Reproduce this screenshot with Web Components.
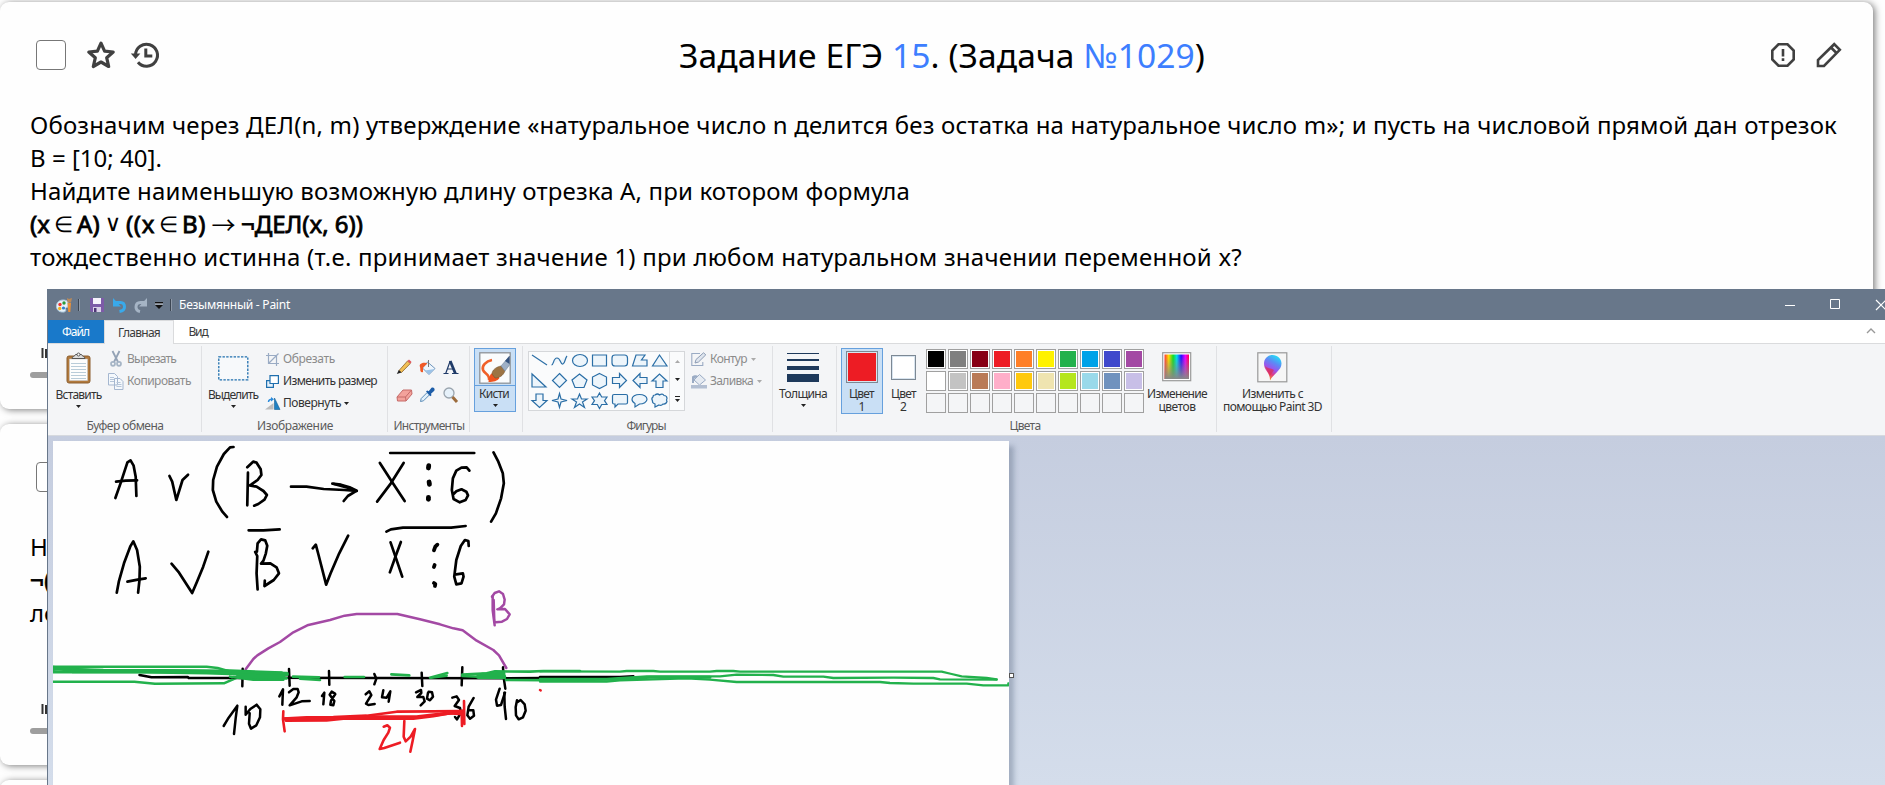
<!DOCTYPE html>
<html lang="ru">
<head>
<meta charset="utf-8">
<title>Задание ЕГЭ 15</title>
<style>
html,body{margin:0;height:785px;overflow:hidden;background:#fefefe}
body{position:relative;font-family:"Noto Sans","Open Sans",sans-serif;color:#000}
</style>
</head>
<body>
<task-page></task-page>
<paint-window></paint-window>
<script>
const define = (name, css, html, ready) => {
  const t = document.createElement('template');
  t.innerHTML = `<style>${css}</style>${html}`;
  customElements.define(name, class extends HTMLElement {
    constructor(){ super(); this.attachShadow({mode:'open'}).append(t.content.cloneNode(true)); }
    connectedCallback(){ if (ready) ready(this, this.shadowRoot); }
  });
};

/* A single line of text tracked to fill the width given in its w attribute. */
define('fit-text', `:host{display:block;white-space:nowrap;flex:none}span{display:inline-block;white-space:nowrap}`,
  `<span><slot></slot></span>`, (el, root) => {
    const w = +el.getAttribute('w'), n = el.textContent.length, s = root.querySelector('span');
    el.style.width = w + 'px';
    s.style.letterSpacing = '0px';
    const d = w - s.getBoundingClientRect().width;
    if (n > 1) s.style.letterSpacing = (d / n).toFixed(4) + 'px';
  });

/* ---------- icons ---------- */
const shape = d => `<path fill="#edf5fb" stroke="#2a6ea6" stroke-width="1.2" d="${d}"/>`;
const ICONS = {
  star:[30,30,`<path fill="none" stroke="#404040" stroke-width="3.2" stroke-linejoin="round" d="M15 3.2l3.6 8 8.6.8-6.500 5.8 2 8.700L15 22l-7.700 4.500 2-8.700L2.800 12l8.600-.8z"/>`],
  history:[30,30,`<path fill="none" stroke="#404040" stroke-width="3" d="M5.500 15A11 11 0 1 1 8 22.200M15.800 8.500v7.500h6.500"/><path fill="#404040" d="M.8 13.500h9.600L5.600 19z"/>`],
  alert:[26,26,`<path fill="none" stroke="#404040" stroke-width="2.600" d="M8.500 2.300h9l6.200 6.200v9l-6.200 6.200h-9l-6.200-6.200v-9z"/><path fill="#404040" d="M11.700 7h2.600v7.500h-2.600zM11.700 16.300h2.600v2.700h-2.600z"/>`],
  pencil:[26,26,`<path fill="none" stroke="#404040" stroke-width="2.600" d="M2 24v-6L18.200 2.200l5.600 5.600L8 24zM15 5.500l5.500 5.500"/>`],
  palette:[18,18,`<path fill="#e8f1f8" stroke="#a9c8de" d="M8 4C3 4 1 8 1.500 11c.5 4 4 5.500 7.500 5 2-.3 2-2 1.500-3s1-2 2.500-2V6C12 4.500 10 4 8 4z"/><circle cx="5" cy="8.500" r="1.700" fill="#e33"/><circle cx="9" cy="7" r="1.700" fill="#2c9a3d"/><circle cx="4.700" cy="12.500" r="1.700" fill="#f0b323"/><circle cx="8.500" cy="12" r="1.600" fill="#2d7fd0"/><path fill="#e8913a" d="M12.500 7h3.500l-.7 9h-2z"/><path fill="#b98a5a" d="M12 2l2 1 3-1-1 4.500h-3.500z"/>`],
  save:[16,16,`<path fill="#7d5ba8" d="M1 1h14v14H2.500L1 13.500z"/><path fill="#f6f2fb" d="M4 1h8v6H4z"/><path fill="#d9cfe8" d="M4 10h8v5H4z"/><path fill="#4d3575" d="M5 11h2.500v4H5z"/>`],
  undo:[15,16,`<path fill="none" stroke="#39a9ea" stroke-width="3" d="M3 5.500h5.500c3 0 4 2 4 4.500s-2 4-5 4.500"/><path fill="#39a9ea" d="M1 1v8.500h8z"/>`],
  redo:[15,16,`<path fill="none" stroke="#a5b4c5" stroke-width="3" d="M12 5.500H7.500c-3 0-4.500 2-4.500 4.500s1.500 4 4 4.500"/><path fill="#a5b4c5" d="M14 1v8.500H6z"/>`],
  qat:[8,8,`<path fill="#111" d="M0 0h8v1.500H0zM0 3h8L4 7z"/><path stroke="#fff" stroke-width=".7" d="M0 2h8"/>`],
  min:[12,12,`<path stroke="#fff" d="M1 6.500h10"/>`],
  max:[12,12,`<path fill="none" stroke="#fff" d="M1.500 1.500h9v9h-9z"/>`],
  close:[12,12,`<path stroke="#fff" stroke-width="1.200" d="M1 1l10 10M11 1L1 11"/>`],
  up:[10,6,`<path fill="none" stroke="#999" stroke-width="1.400" d="M1 5l4-4 4 4"/>`],
  arrow:[5,3,`<path fill="#222" d="M0 0h5L2.500 3z"/>`],
  arrowg:[5,3,`<path fill="#aaa" d="M0 0h5L2.500 3z"/>`],
  paste:[26,32,`<rect x="1" y="4" width="23" height="27" rx="2" fill="#b27a3d" stroke="#8c5f30"/><path fill="#fdfdfd" stroke="#c9c9c9" stroke-width=".6" d="M3.500 7h18v21.500h-18z"/><path stroke="#b9ccd9" d="M5 11.500h15M5 14.500h15M5 17.500h15M5 20.500h15M5 23.500h15M5 26.500h15"/><path fill="#ddd" stroke="#555" d="M6 6.500c0-2 3-2 3.500-4h6c.5 2 3.500 2 3.500 4z"/><circle cx="12.500" cy="2.500" r="1.500" fill="#fff" stroke="#555"/>`],
  cut:[12,16,`<path stroke="#93a2b5" stroke-width="1.800" fill="none" d="M2.500 0l5.500 11M9.500 0L4 11"/><circle cx="3" cy="12.800" r="2" fill="none" stroke="#a5b4c5" stroke-width="1.700"/><circle cx="9" cy="12.800" r="2" fill="none" stroke="#a5b4c5" stroke-width="1.700"/>`],
  copy:[16,17,`<path fill="#f4f8fc" stroke="#a5b7d0" d="M.5.500h6l3 3V12h-9zM6.500 5.500h5.500l3 3v8h-8.500z"/><path stroke="#b5c5d9" d="M2 4.500h4M2 6.500h4M2 8.500h4M8.500 9.500h4M8.500 11.500h5M8.500 13.500h5"/>`],
  select:[31,25,`<rect x=".8" y=".8" width="29" height="23" fill="#f7f9fb" stroke="#1f6fae" stroke-width="1.300" stroke-dasharray="2.400 1.300"/>`],
  crop:[13,13,`<path fill="none" stroke="#9aabc4" stroke-width="1.200" d="M2.500 0v10.500H13M0 2.500h10.500V13M3 10L12.500.5"/>`],
  resize:[13,13,`<path fill="#e4f0fa" stroke="#1f6fae" stroke-width="1.200" d="M.6 5.600h6.800v6.800H.6z"/><path fill="#fff" stroke="#1f6fae" stroke-width="1.200" d="M4 .6h8.400V8.500H4z"/>`],
  rotate:[16,13,`<path fill="#bcbcbc" d="M0 12.500h8.500V6z"/><path fill="#1f80c2" stroke="#155f94" stroke-width=".6" d="M9.500 1l5.500 11.500H9.500z"/><path fill="none" stroke="#2a8bdc" stroke-width="1.500" d="M3.500 5c0-2 1.500-2.800 3.500-2.800"/><path fill="#2a8bdc" d="M6 0l3 2.200-3 2.300z"/>`],
  tpencil:[16,16,`<path fill="#f2bf55" stroke="#96703a" stroke-width=".9" d="M3 11.500L11.500 2l2.800 2.500L5.500 13.500z"/><path fill="#222" d="M.8 15l2-4 2.700 2.500z"/><path fill="#e0565b" d="M11.500 2L13 .6l2.600 2.300-1.300 1.600z"/>`],
  bucket:[17,17,`<path fill="#eef5fc" stroke="#6f96bd" d="M8.500 3l7.500 6.500-6 6L3.500 9z"/><path fill="#9cc3e8" d="M6 11.500L15.500 10l-5.500 5.300z"/><path fill="#f05a28" d="M1 5.500C3 3 7 3.500 8.500 4.500L4 8.500v4.500c-2 1-3-1-2.700-3C1.500 8 0 7 1 5.500z"/><path fill="none" stroke="#777" d="M9.500 8V1"/>`],
  txt:[16,16,`<path fill="none" stroke="#1f3a68" stroke-width="2.800" d="M7.200 2l5.200 12.500"/><path fill="none" stroke="#1f3a68" stroke-width="1.200" d="M7.200 2L2.700 14.500M4.500 10h6M.5 14.500h5M9 14.500h6.500"/>`],
  eraser:[17,16,`<path fill="#f3a29b" stroke="#c56a68" d="M7 3h8.500L16 7l-6 7H1.500L1 10z"/><path fill="none" stroke="#c56a68" d="M1 10h8.500L15.500 3M9.500 10l.5 4"/>`],
  pip:[16,16,`<path fill="#e2f0fb" stroke="#5c8db8" d="M1.500 14.500l.7-3 6-6 2.300 2.300-6 6z"/><path fill="#1d5da8" d="M7 4.500l1.200-1 1.500.800L12.500.8c2-1 4 1 2.800 3L12 6.800l.5 1.500-1.200 1z"/>`],
  zoomi:[16,17,`<circle cx="6" cy="6" r="5" fill="#e6f1fa" stroke="#9aa4ae" stroke-width="1.300"/><path stroke="#9c6b3c" stroke-width="3" d="M9.500 10l4.500 5"/>`],
  brush:[32,32,`<rect x=".8" y=".8" width="30.400" height="30.400" fill="#fafcfd" stroke="#8f9499" stroke-width="1.300"/><path fill="none" stroke="#f0602a" stroke-width="2.600" d="M13 8C7 9 2.500 14 4 18s7 4 6 10"/><path fill="#f0531f" d="M9.500 30c0-5 2-9 6-10l5 6c-2 3-6 4-11 4z"/><path fill="#9c7444" stroke="#6e4f2a" stroke-width=".5" d="M13 22c0-4 4-7 9-8l4 5c-2 5-6 7-10 7z"/><path fill="#9eb0c6" stroke="#64788f" stroke-width=".5" d="M22 14l8.500-10v9L26 19z"/><path fill="#34527e" d="M26 9l4.500-5v8z"/>`],
  outline:[16,15,`<path fill="none" stroke="#9aabc4" stroke-width="1.100" d="M9 1.500H.8v12h11V10"/><path fill="#dfe5ee" stroke="#8d9db5" d="M4 11l1-3.500L12.500.8l2.300 2L7.500 10z"/>`],
  fill:[17,16,`<path fill="#e6ebf2" stroke="#9aabc4" d="M8.500 1.500l6 5.500-6 5L3 7z"/><path fill="#9aabc4" d="M1 3.500C3 2 6 2 7 3L3 6v4H1z"/><path fill="#b3bfd2" d="M0 12h16v3.500H0z"/>`],
  rainbow:[30,30,`<defs><linearGradient id="r"><stop offset="0" stop-color="#f33"/><stop offset=".17" stop-color="#fd0"/><stop offset=".35" stop-color="#1d2"/><stop offset=".5" stop-color="#0de"/><stop offset=".68" stop-color="#21f"/><stop offset=".85" stop-color="#e0f"/><stop offset="1" stop-color="#f04"/></linearGradient><linearGradient id="g" x2="0" y2="1"><stop offset=".1" stop-color="#888" stop-opacity="0"/><stop offset="1" stop-color="#888"/></linearGradient></defs><rect x=".7" y=".7" width="28" height="28" fill="#fff" stroke="#999" stroke-width="1.200"/><path fill="url(#r)" d="M2.500 2.500h24.500v24.500H2.500z"/><path fill="url(#g)" d="M2.500 2.500h24.500v24.500H2.500z"/>`],
  p3d:[31,31,`<defs><linearGradient id="a" x1=".7" y1="0" x2=".3" y2="1"><stop offset="0" stop-color="#1fe0f5"/><stop offset=".3" stop-color="#5a8cf5"/><stop offset=".55" stop-color="#9a55ee"/><stop offset=".75" stop-color="#e23a7c"/><stop offset="1" stop-color="#f7a21a"/></linearGradient></defs><rect x=".8" y=".8" width="29" height="29" fill="#f6f6f6" stroke="#999" stroke-width="1.200"/><path fill="url(#a)" d="M15.500 3c5 0 9 4 9 8.500 0 7-8 10-11.500 17 0-4-1-6-3-9-2-2.500-3-5-3-8C7 7 10.500 3 15.500 3z"/><path fill="#dd2e55" opacity=".7" d="M8 14c2 3 6 2 9 4l-4 6z"/>`],
  marks:[12,12,`<path stroke="#333" stroke-width="2" d="M1.500 1v10M5 2v9M8 0v11"/>`],
};
[ 'M2 3L17 13','M1.500 13C4 13 3 6 7 6s3 7 6 6c2-.5 2-6 4-8','M10 2.500c4 0 7.500 2.500 7.500 6s-3.500 6-7.500 6-7.500-2.500-7.500-6 3.500-6 7.500-6z','M2.500 3h14v11h-14z','M5 3h9.500q3 0 3 3v5q0 3-3 3H5q-3 0-3-3V6q0-3 3-3z','M2.500 14L6 3h9l-3.500 5H17v6z','M9.500 3L17 14H2.500z',
  'M2 2v13h14z','M9.500 1.500l7 7-7 7-7-7z','M9.500 2l7.500 6-3 7.500H5L2 8z','M9.500 1.500l7 3.500v8l-7 3.500-7-3.500V5z','M2.500 5.500h7v-4l7 7-7 7v-4h-7z','M17 5.500h-7v-4l-7 7 7 7v-4h7z','M6 15.500V9H2l7.500-7L17 9h-4v6.500z',
  'M6 2v6.500H2l7.500 7 7.500-7h-4V2z','M9.500 1.500l1.500 5.500 6 1.500-6 1.500-1.500 5.500L8 10 2 8.500 8 7z','M9.500 2l2 5H17l-4.500 3 2 5.500-5-3.500-5 3.500 2-5.500L2 7h5.500z','M9.500 1l2.200 4H17l-2.500 3.700L17 12.500h-5.300l-2.200 4-2.200-4H2l2.500-3.800L2 5h5.300z','M4 2.500h12q1.500 0 1.500 1.500v6.500q0 1.500-1.500 1.500H8l-3 3V12H4q-1.500 0-1.500-1.500V4Q2.500 2.500 4 2.500z','M9.500 2.500c4 0 7.500 2 7.500 4.800s-3.500 4.700-7.500 4.700L5 15v-3.500c-2-1-3-2.500-3-4.200 0-2.800 3.500-4.800 7.500-4.800z','M5 3q2.500-2 4.500 0 3-2 4.500.5 3 0 3 3-1 1.500 0 3-1 3-4 2.500-1.500 2-4 1-2 1-4 2v-3q-3-1-2.500-3-1.500-3 .5-4Q3 3 5 3z'
].forEach((d,i)=>ICONS['s'+i]=[19,18,shape(d)]);

define('ui-icon', `:host{display:block;flex:none;line-height:0}svg{display:block;overflow:visible}`, ``, (el, root) => {
  const [w,h,body] = ICONS[el.getAttribute('name')];
  if (!root.querySelector('svg')) root.innerHTML += `<svg width="${w}" height="${h}" viewBox="0 0 ${w} ${h}">${body}</svg>`;
});

/* ---------- task page ---------- */
define('task-card', `
:host{display:block;box-sizing:border-box;height:407px;width:1873px;background:#fefefe;border-radius:9px;box-shadow:2px 1px 7px rgba(0,0,0,.5);padding:34px 31px 0 30px}
:host([short]){height:341px}
header{display:flex;align-items:center;height:37px}
i{box-sizing:border-box;width:30px;height:30px;border:1.500px solid #777;border-radius:4px;margin:0 20px 0 6px;background:#fff}
.l{display:flex;flex:1;gap:14px;align-items:center}
.r{display:flex;gap:20px;align-items:center;justify-content:flex-end;width:62px}
section{margin-top:35px;font-size:24px;line-height:33px;min-height:99px}
footer{margin-top:74px;padding-left:11px;width:400px}
footer div{margin:13px 0 0 -11px;height:6px;width:400px;border-radius:3px;background:#9e9e9e}
`, `<header><i></i><div class="l"><ui-icon name="star"></ui-icon><ui-icon name="history"></ui-icon><slot name="title"></slot></div><div class="r"><ui-icon name="alert"></ui-icon><ui-icon name="pencil"></ui-icon></div></header><section><slot></slot></section><footer><ui-icon name="marks"></ui-icon><div></div></footer>`);

define('task-page', `
:host{display:block;height:785px;overflow:hidden}
main{display:flex;flex-direction:column;gap:15px;padding-top:2px}
fit-text.t{font-size:33.6px;line-height:44px;margin-left:505px}
a{color:#3d7eff;text-decoration:none}
b{font-weight:400;-webkit-text-stroke:.8px #000}
.formula{display:flex;height:33px}
.formula fit-text{-webkit-text-stroke:.8px #000}
.formula span{flex:none;text-align:center;width:27px;height:33px}
.formula .in{font-size:22px}
.formula .or{font-family:"DejaVu Sans",sans-serif;width:26px;font-size:23px}
.formula .ar{font-family:"Noto Sans CJK JP","Noto Sans CJK SC",sans-serif;width:35px}
`, `<main>
<task-card><fit-text class="t" slot="title" w="526">Задание ЕГЭ <a>15</a>. (Задача <a>№1029</a>)</fit-text>
<fit-text w="1807">Обозначим через ДЕЛ(n, m) утверждение «натуральное число n делится без остатка на натуральное число m»; и пусть на числовой прямой дан отрезок</fit-text>
<fit-text w="132">B = [10; 40].</fit-text>
<fit-text w="880">Найдите наименьшую возможную длину отрезка A, при котором формула</fit-text>
<div class="formula"><fit-text w="20">(x</fit-text><span class="in">∈</span><fit-text w="23">A)</fit-text><span class="or">∨</span><fit-text w="29">((x</fit-text><span class="in">∈</span><fit-text w="24">B)</fit-text><span class="ar">→</span><fit-text w="122">¬ДЕЛ(x, 6))</fit-text></div>
<fit-text w="1212">тождественно истинна (т.е. принимает значение 1) при любом натуральном значении переменной x?</fit-text></task-card>
<task-card short><fit-text w="18">Н</fit-text><fit-text w="22"><b>¬(</b></fit-text><fit-text w="28">ло</fit-text></task-card>
<task-card></task-card></main>`);

/* ---------- Paint ---------- */
define('title-bar', `
:host{display:flex;align-items:center;height:31px;box-sizing:border-box;color:#fff;font-size:12px;padding-left:8px}
u{width:2px;height:12px;background:#8e99a8;border-left:1px solid #3c4653;box-sizing:border-box}
.s{flex:1}
`, `<ui-icon name="palette"></ui-icon><u style="margin:0 9px 0 5px"></u><ui-icon name="save"></ui-icon><ui-icon name="undo" style="margin:0 6px 0 7px"></ui-icon><ui-icon name="redo"></ui-icon><ui-icon name="qat" style="margin:3px 6px 0 7px"></ui-icon><u style="margin:0 7px 0 1px"></u><fit-text w="111">Безымянный - Paint</fit-text><span class="s"></span><ui-icon name="min"></ui-icon><ui-icon name="max" style="margin:-1px 34px 0 33px"></ui-icon><ui-icon name="close"></ui-icon>`);

define('tab-bar', `
:host{display:flex;height:24px;background:#fff;box-sizing:border-box;border-bottom:1px solid #dadbdd;font-size:12px;line-height:23px;color:#3b3b3b}
div{box-sizing:border-box;height:23px;display:flex;justify-content:center}
.f{width:56px;background:#1979ca;color:#fff;padding-right:1px}
.m{width:70px;height:24px;background:#f4f5f7;border:1px solid #dadbdd;border-bottom:0}
.v{width:48px}
ui-icon{margin:8px 9px 0 auto}
`, `<div class="f"><fit-text w="27">Файл</fit-text></div><div class="m"><fit-text w="42">Главная</fit-text></div><div class="v"><fit-text w="19">Вид</fit-text></div><ui-icon name="up"></ui-icon>`);

define('ribbon-group', `
:host{display:flex;flex-direction:column;box-sizing:border-box;height:91px;flex:none;background:linear-gradient(#e0e1e4,#e0e1e4) right 2px/1px 86px no-repeat}
.b{height:73px;display:flex;align-items:flex-start;padding-top:1px}
.c{height:17px;display:flex;justify-content:center;color:#5c5c5c}
`, `<div class="b"><slot></slot></div><div class="c"><slot name="cap"></slot></div>`);

/* Large button: picture above, one or two lines of caption, optional menu arrow. */
define('big-button', `
:host{display:flex;flex-direction:column;align-items:center;flex:none;box-sizing:border-box;line-height:13px}
.i{height:40px;display:flex;align-items:center;justify-content:center}
ui-icon{margin-top:4px}
:host(:not([menu])) ui-icon{display:none}
`, `<div class="i"><slot name="icon"></slot></div><slot></slot><ui-icon name="arrow"></ui-icon>`);

define('tool-row', `
:host{display:flex;align-items:center;height:22px;line-height:16px;color:#333}
:host([off]){color:#8b8b8b}
.i{width:21px;display:flex;flex:none}
`, `<div class="i"><slot name="icon"></slot></div><slot></slot>`);

define('shape-gallery', `
:host{display:flex;box-sizing:border-box;width:157px;height:60px;border:1px solid #d5d7da;background:#fafbfc;flex:none}
.g{display:grid;grid-template-columns:repeat(7,20px);grid-auto-rows:20px;width:141px;border-right:1px solid #dcdee1;padding-left:1px;box-sizing:border-box}
.s{display:flex;flex-direction:column;align-items:center;flex:1;justify-content:space-around}
`, `<div class="g">${[...Array(21)].map((_,i)=>`<ui-icon name="s${i}"></ui-icon>`).join('')}</div><div class="s"><ui-icon name="arrowg" style="transform:scaleY(-1)"></ui-icon><ui-icon name="arrow"></ui-icon><ui-icon name="arrow" style="border-top:1px solid #222;padding-top:2px"></ui-icon></div>`);

const COL = ['#000','#7f7f7f','#880015','#ed1c24','#ff7f27','#fff200','#22b14c','#00a2e8','#3f48cc','#a349a4','#fff','#c3c3c3','#b97a57','#ffaec9','#ffc90e','#efe4b0','#b5e61d','#99d9ea','#7092be','#c8bfe7'];
define('color-grid', `
:host{display:grid;grid-template-columns:repeat(10,20px);grid-auto-rows:20px;gap:2px;flex:none}
i{box-sizing:border-box;border:1px solid #a0a0a0;padding:1px;background-clip:content-box;box-shadow:inset 0 0 0 1px #fff}
i.e{box-shadow:none}
`, [...Array(30)].map((_,i)=>COL[i]?`<i style="background-color:${COL[i]}"></i>`:'<i class="e"></i>').join(''));

define('ribbon-bar', `
:host{display:flex;height:92px;box-sizing:border-box;background:#f4f5f7;border-bottom:1px solid #d6d9de;font-size:12px;line-height:15px;color:#333}
.col{display:flex;flex-direction:column;padding-top:3px;flex:none}
.tools{display:grid;grid-template-columns:23px 24px 17px;grid-auto-rows:28px;margin:14px 0 0 8px}
.br{width:42px;height:64px;box-sizing:border-box;margin:3px 0 0 4px;border:1px solid #66a0dd;background:linear-gradient(#66a0dd,#66a0dd) 0 36px/100% 1px no-repeat #c9dff5}
.c1{width:42px;height:66px;margin:3px 0 0 4px;border:1px solid #66a0dd;background:#c9dff5}
.sw{box-sizing:border-box;width:32px;height:32px;border:1px solid #7c8894;background:#ed1c24;box-shadow:inset 0 0 0 1px #d8e4ef}
.sw.w{width:25px;height:25px;background:#fff}
.bars{display:flex;flex-direction:column;width:32px}
.bars i{background:#1e395b}
`, `
<ribbon-group style="width:154px">
 <big-button menu style="width:61px;padding-top:3px"><ui-icon slot="icon" name="paste" style="margin-left:1px"></ui-icon><fit-text w="46">Вставить</fit-text></big-button>
 <div class="col" style="padding-left:1px"><tool-row off><ui-icon slot="icon" name="cut"></ui-icon><fit-text w="49" style="margin-left:-4px">Вырезать</fit-text></tool-row><tool-row off style="margin-left:-2px"><ui-icon slot="icon" name="copy"></ui-icon><fit-text w="64" style="margin-left:-2px">Копировать</fit-text></tool-row></div>
 <fit-text slot="cap" w="77">Буфер обмена</fit-text></ribbon-group>
<ribbon-group style="width:186px">
 <big-button menu style="width:50px;padding-top:3px;margin-left:6px"><ui-icon slot="icon" name="select"></ui-icon><fit-text w="50">Выделить</fit-text></big-button>
 <div class="col" style="padding-left:8px"><tool-row off><ui-icon slot="icon" name="crop"></ui-icon><fit-text w="52" style="margin-left:-4px">Обрезать</fit-text></tool-row><tool-row><ui-icon slot="icon" name="resize"></ui-icon><fit-text w="94" style="margin-left:-4px">Изменить размер</fit-text></tool-row><tool-row><ui-icon slot="icon" name="rotate" style="margin-left:-1px"></ui-icon><fit-text w="58" style="margin:0 3px 0 -4px">Повернуть</fit-text><ui-icon name="arrow"></ui-icon></tool-row></div>
 <fit-text slot="cap" w="76">Изображение</fit-text></ribbon-group>
<ribbon-group style="width:82px">
 <div class="tools"><ui-icon name="tpencil"></ui-icon><ui-icon name="bucket"></ui-icon><ui-icon name="txt"></ui-icon><ui-icon name="eraser"></ui-icon><ui-icon name="pip"></ui-icon><ui-icon name="zoomi"></ui-icon></div>
 <fit-text slot="cap" w="71">Инструменты</fit-text></ribbon-group>
<ribbon-group style="width:53px">
 <big-button menu class="br"><ui-icon slot="icon" name="brush" style="margin-top:-3px"></ui-icon><fit-text w="30" style="margin:-2px 2px 0 0">Кисти</fit-text></big-button></ribbon-group>
<ribbon-group style="width:250px">
 <shape-gallery style="margin:6px 0 0 5px"></shape-gallery>
 <div class="col" style="padding-left:6px"><tool-row off><ui-icon slot="icon" name="outline"></ui-icon><fit-text w="37" style="margin:0 4px 0 -2px">Контур</fit-text><ui-icon name="arrowg"></ui-icon></tool-row><tool-row off><ui-icon slot="icon" name="fill"></ui-icon><fit-text w="43" style="margin:0 4px 0 -2px">Заливка</fit-text><ui-icon name="arrowg"></ui-icon></tool-row></div>
 <fit-text slot="cap" w="39" style="margin-left:-4px">Фигуры</fit-text></ribbon-group>
<ribbon-group style="width:64px">
 <big-button menu style="width:60px;padding-top:2px"><div slot="icon" class="bars"><i style="height:1px"></i><i style="height:2px;margin-top:5px"></i><i style="height:4px;margin-top:5px"></i><i style="height:8px;margin-top:4px"></i></div><fit-text w="48">Толщина</fit-text></big-button></ribbon-group>
<ribbon-group style="width:380px">
 <big-button class="c1" style="box-sizing:border-box"><div slot="icon" class="sw" style="margin-top:-4px"></div><fit-text w="25" style="margin:-2px 1px 0 0">Цвет</fit-text><fit-text w="7">1</fit-text></big-button>
 <big-button style="width:41px;padding-top:2px"><div slot="icon" class="sw w" style="margin-top:1px"></div><fit-text w="25">Цвет</fit-text><fit-text w="7">2</fit-text></big-button>
 <color-grid style="margin:4px 0 0 2px"></color-grid>
 <big-button style="width:66px;padding-top:2px"><ui-icon slot="icon" name="rainbow"></ui-icon><fit-text w="60">Изменение</fit-text><fit-text w="37">цветов</fit-text></big-button>
 <fit-text slot="cap" w="31" style="margin-left:-4px">Цвета</fit-text></ribbon-group>
<ribbon-group style="width:115px">
 <big-button style="width:111px;padding-top:2px"><ui-icon slot="icon" name="p3d"></ui-icon><fit-text w="61">Изменить с</fit-text><fit-text w="99">помощью Paint 3D</fit-text></big-button></ribbon-group>`);

const K = '#000', G = '#22b14c', P = '#a349a4', R = '#ed1c24';
const ink = (c, w, list) => list.map(p=>`<polyline points="${p}" stroke="${c}" stroke-width="${w}"/>`).join('');
define('drawing-sheet', `
:host{display:block;width:956px;height:344px;background:#fefefe;flex:none;box-shadow:5px 5px 5px rgba(90,105,130,.4)}
svg{display:block}
polyline{fill:none;stroke-linecap:round;stroke-linejoin:round;vector-effect:non-scaling-stroke}
`, `<svg width="956" height="344" viewBox="53 441 956 344">
<g transform="translate(0 430) scale(.34439 .33333)">${ink(K,2.7,[
 '335,204 350,160 370,97 379,91 388,107 394,140 396,198','337,155 365,152 398,151',
 '492,138 500,155 512,210 518,190 530,150 546,134',
 '678,51 668,52 650,72 630,110 619,150 618,180 628,215 645,244 659,261',
 '720,128 718,226','718,112 735,95 745,98 757,118 759,135 748,150 730,163 725,166 745,170 765,183 775,195 768,209 750,222 738,227',
 '845,170 890,170 940,177 1000,180 1036,183','965,161 990,164 1015,172 1036,182 1010,198 998,213','970,162 1020,176 1010,177',
 '1103,99 1140,158 1175,213','1172,99 1135,160 1095,215','1133,69 1377,69',
 '1363,122 1355,112 1340,113 1325,122 1315,145 1312,180 1317,207 1335,217 1352,210 1359,196 1354,185 1340,178 1325,184 1318,191',
 '1433,67 1447,95 1460,130 1463,160 1455,205 1440,250 1426,275',
 '339,488 345,455 360,400 378,350 387,334 398,360 406,410 405,450 401,488','370,455 400,449 423,445',
 '498,401 520,428 558,489 572,455 590,410 605,365','722,301 765,301 812,298',
 '741,366 747,378 745,430 748,478','746,365 748,340 758,328 770,331 776,347 772,370 765,392 758,401 785,400 803,412 810,430 795,450 768,468 769,452',
 '908,355 917,344 925,375 947,464 960,430 985,370 1011,317',
 '1122,305 1135,298 1170,293 1310,293 1352,288','1134,337 1150,385 1168,440','1164,336 1150,375 1132,427',
 '1361,348 1360,333 1350,330 1338,348 1325,390 1319,440 1325,463 1340,460 1346,440 1344,430 1320,434'])}
${ink(K,4.8,['1245,107 1244,114','1246,156 1247,163','1244,202 1244,208'])}
${ink(K,3.8,['1270,344 1264,350 1260,361','1262,405 1260,411','1260,459 1264,462 1263,468'])}
</g>
<g transform="translate(0 430) scale(.34439 .33333)">
${ink(K,2.5,['405,735 440,742 545,741 548,744 705,744'])}
${ink(G,2.5,['154,710 600,710 632,714 690,731','154,719 200,717 300,720 470,721 650,722','154,727 400,727 600,730 690,733','154,755 390,755 450,761 650,760 690,742'])}
${ink(G,4,['154,713 190,718 260,723','210,724 500,724 680,727 720,738'])}
</g>
<g transform="translate(200 590) scale(.33333)">
${ink(K,2.5,['100,263 916,265 1140,263','128,236 127,289','267,237 269,287','387,243 388,284','523,252 529,266 523,283','665,248 667,288','787,232 785,286','909,232 911,262 916,296',
 '71,408 86,383 112,347 107,385 102,432','137,350 137,374 151,357 170,344 181,358 180,382 169,406 153,416 147,401 149,370',
 '238,319 249,298 247,344','267,307 280,297 293,297 296,307 290,322 269,346 305,334 329,333',
 '366,318 373,308 370,343','405,311 395,305 389,314 403,333 400,346 391,344 393,332 406,312',
 '497,313 508,304 514,315 498,341 505,345 524,342','550,301 546,322 560,323 571,304 566,335',
 '648,307 663,300 664,309 652,321 670,321 674,334 662,346','684,308 681,326 690,331 699,320 696,307 686,305',
 '757,323 770,319 777,330 764,348 780,354 783,368 771,388 765,381','821,324 806,350 802,376 810,386 822,377 820,361 806,360',
 '899,296 888,329 891,347 903,345 915,308','913,308 914,350 918,387','951,331 947,352 948,376 956,388 969,382 977,362 974,343 962,330 953,336'])}
${ink(P,2.5,['137,238 160,207 172,196 205,175 240,156 280,127 322,106 390,90 434,77 470,72 592,72 660,88 720,103 760,115 788,121 830,152 880,180 897,196 919,234',
 '878,18 878,60 884,106','876,20 884,9 897,4 909,12 914,29 912,43 900,55 892,58 915,57 929,73 921,87 906,95 887,97','881,30 883,95'])}
${ink(G,2.6,['70,241 245,248','90,260 160,269 250,269','125,264 260,265','279,260 357,262','300,266 360,270','434,261 492,261','574,253 628,256','690,263 740,257','695,262 742,249','787,254 860,250 885,244 990,245 1030,243 1140,243','787,258 914,264','918,270 1140,271'])}
${ink(G,4.5,['100,249 260,252','115,258 250,260','835,260 912,260','848,254 910,252'])}
${ink(R,2.6,['250,364 249,388 254,424','250,386 320,382 400,381 500,377 590,365 700,364 780,363','258,392 380,391 430,386 640,386 700,379 760,368','792,333 793,402','785,365 786,408',
 '551,410 562,406 570,413 565,428 551,450 539,477 553,474 600,458','613,393 611,440 617,454 632,440 645,417 638,452 631,485'])}
${ink(R,3.6,['255,387 410,384 520,381 650,381 720,373 790,363','740,368 790,371'])}
${ink(R,2.5,['1020,300 1022,301'])}
</g>
<g transform="translate(540 640) scale(.33333)">
${ink(K,2.6,['0,111 240,111 280,109'])}
${ink(G,2.3,['0,94 240,95 260,93 340,93 360,95 510,95 530,93 580,93 600,95 1205,95 1235,102 1265,109 1340,114 1370,118','0,117 200,117 320,109 540,109 590,104 700,105 730,110 850,110 880,114 1060,113 1180,114 1200,118 1370,119','0,125 200,125 240,121 440,115 510,119 590,126 1020,126 1050,129 1120,131 1280,131 1330,136 1405,136 1405,130'])}
${ink(G,3,['0,120 230,118 330,112 510,112'])}
</g></svg>`);

define('paint-window', `
:host{position:absolute;left:47px;top:289px;width:1838px;height:496px;overflow:hidden;display:block;background:#68778a}
.in{margin-left:1px;height:465px;display:flex;flex-direction:column;background:#c5cddf}
title-bar{width:1840px}
.area{flex:1;background:linear-gradient(#c5cddf,#d4ddeb);padding:5px 0 0 5px;display:flex;align-items:flex-start}
i{position:relative;z-index:1;box-sizing:border-box;width:5px;height:5px;border:1px solid #555;background:#fff;margin-top:232px}
`, `<title-bar></title-bar><div class="in"><tab-bar></tab-bar><ribbon-bar></ribbon-bar><div class="area"><drawing-sheet></drawing-sheet><i></i></div></div>`);
</script>
</body>
</html>
